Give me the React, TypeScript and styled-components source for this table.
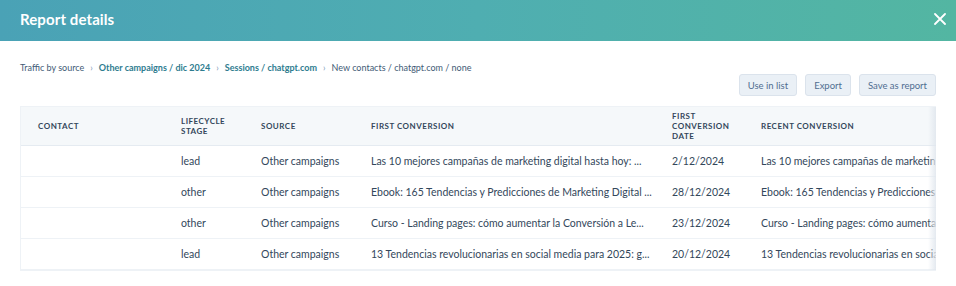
import React from 'react';
import styled, { createGlobalStyle } from 'styled-components';

const GlobalStyle = createGlobalStyle`
  body {
    margin: 0;
    background: #fff;
    font-family: "Lato", "Open Sans", sans-serif;
    color: #33475b;
  }
`;

const Header = styled.header`
  height: 41px;
  box-sizing: border-box;
  display: flex;
  align-items: center;
  justify-content: space-between;
  padding: 0 9px 4px 20px;
  background: linear-gradient(90deg, #4aa2b6 0%, #4faeb1 50%, #53b6a2 100%);
`;

const Title = styled.h1`
  margin: 0;
  font-size: 15px;
  font-weight: 700;
  color: #fff;
  letter-spacing: 0.1px;
`;

const CloseButton = styled.button`
  width: 14px;
  height: 14px;
  padding: 0;
  border: none;
  background: none;
  display: flex;
  align-items: center;
  justify-content: center;
`;

const Body = styled.div`
  padding: 20px 20px 0;
`;

const Breadcrumbs = styled.nav`
  display: flex;
  align-items: center;
  gap: 6px;
  font-size: 9px;
  height: 12px;
`;

const Crumb = styled.span<{ $link?: boolean }>`
  color: ${(p) => (p.$link ? '#2e7c8f' : '#425b76')};
  font-weight: ${(p) => (p.$link ? 700 : 400)};
  white-space: nowrap;
`;

const Sep = styled.span`
  color: #7c98b6;
  font-size: 9px;
`;

const Actions = styled.div`
  display: flex;
  justify-content: flex-end;
  gap: 8px;
  margin-top: 1px;
`;

const ActionButton = styled.button`
  height: 22px;
  padding: 0 8px;
  border: 1px solid #dbe3ec;
  border-radius: 3px;
  background: #eaf0f6;
  color: #506e91;
  font-family: inherit;
  font-size: 9.5px;
`;

const TableFrame = styled.div`
  position: relative;
  margin-top: 10px;
  overflow: hidden;
  border: 1px solid #eef2f6;
  border-right: none;

  &::after {
    content: '';
    position: absolute;
    top: 0;
    right: 0;
    bottom: 0;
    width: 8px;
    background: linear-gradient(90deg, rgba(225, 231, 238, 0) 0%, rgba(225, 231, 238, 0.9) 100%);
  }
`;

const Table = styled.table<{ $w: number }>`
  border-collapse: collapse;
  table-layout: fixed;
  width: ${(p) => p.$w}px;
`;

const HeadCell = styled.th<{ $w: number }>`
  box-sizing: border-box;
  width: ${(p) => p.$w}px;
  height: 38px;
  padding: 0 10px 0 17px;
  background: #f5f8fa;
  text-align: left;
  vertical-align: middle;
  font-size: 8px;
  font-weight: 700;
  line-height: 10px;
  letter-spacing: 0.5px;
  color: #33475b;
  border-bottom: 1px solid #e5ebf1;
`;

const Cell = styled.td`
  height: 30px;
  padding: 0 17px;
  font-size: 10.5px;
  color: #33475b;
  white-space: nowrap;
  overflow: hidden;
  border-bottom: 1px solid #eef2f6;
`;

const columns = [
  { label: 'Contact', w: 143 },
  { label: 'Lifecycle stage', w: 80 },
  { label: 'Source', w: 110 },
  { label: 'First conversion', w: 301 },
  { label: 'First conversion date', w: 89 },
  { label: 'Recent conversion', w: 330 },
];

const tableWidth = columns.reduce((s, c) => s + c.w, 0);

const rows = [
  {
    stage: 'lead',
    source: 'Other campaigns',
    first: 'Las 10 mejores campañas de marketing digital hasta hoy: ...',
    date: '2/12/2024',
    recent: 'Las 10 mejores campañas de marketing digital hasta hoy: ...',
  },
  {
    stage: 'other',
    source: 'Other campaigns',
    first: 'Ebook: 165 Tendencias y Predicciones de Marketing Digital ...',
    date: '28/12/2024',
    recent: 'Ebook: 165 Tendencias y Predicciones de Marketing Digital ...',
  },
  {
    stage: 'other',
    source: 'Other campaigns',
    first: 'Curso - Landing pages: cómo aumentar la Conversión a Le...',
    date: '23/12/2024',
    recent: 'Curso - Landing pages: cómo aumentar la Conversión a Le...',
  },
  {
    stage: 'lead',
    source: 'Other campaigns',
    first: '13 Tendencias revolucionarias en social media para 2025: g...',
    date: '20/12/2024',
    recent: '13 Tendencias revolucionarias en social media para 2025: g...',
  },
];

export default function App() {
  return (
    <>
      <GlobalStyle />
      <Header>
        <Title>Report details</Title>
        <CloseButton aria-label="Close">
          <svg width="12" height="12" viewBox="0 0 12 12">
            <path d="M1 1 L11 11 M11 1 L1 11" stroke="#fff" strokeWidth="1.8" strokeLinecap="round" />
          </svg>
        </CloseButton>
      </Header>
      <Body>
        <Breadcrumbs>
          <Crumb>Traffic by source</Crumb>
          <Sep>›</Sep>
          <Crumb $link>Other campaigns / dic 2024</Crumb>
          <Sep>›</Sep>
          <Crumb $link>Sessions / chatgpt.com</Crumb>
          <Sep>›</Sep>
          <Crumb>New contacts / chatgpt.com / none</Crumb>
        </Breadcrumbs>
        <Actions>
          <ActionButton>Use in list</ActionButton>
          <ActionButton>Export</ActionButton>
          <ActionButton>Save as report</ActionButton>
        </Actions>
        <TableFrame>
          <Table $w={tableWidth}>
            <thead>
              <tr>
                {columns.map((c) => (
                  <HeadCell key={c.label} $w={c.w}>
                    {c.label.toUpperCase()}
                  </HeadCell>
                ))}
              </tr>
            </thead>
            <tbody>
              {rows.map((r, i) => (
                <tr key={i}>
                  <Cell />
                  <Cell>{r.stage}</Cell>
                  <Cell>{r.source}</Cell>
                  <Cell>{r.first}</Cell>
                  <Cell>{r.date}</Cell>
                  <Cell>{r.recent}</Cell>
                </tr>
              ))}
            </tbody>
          </Table>
        </TableFrame>
      </Body>
    </>
  );
}
